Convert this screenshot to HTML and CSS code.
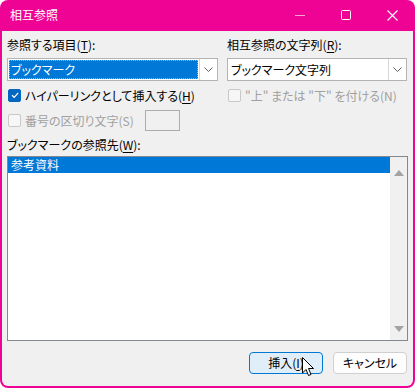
FILE: index.html
```html
<!DOCTYPE html>
<html lang="ja">
<head>
    <meta charset="UTF-8">
    <title>相互参照</title>
    <link rel="stylesheet" href="styles.css">
</head>
<body>
    <div class="window">
        <div class="titlebar">
            <span class="title">相互参照</span>
            <div class="controls">
                <span class="ctl min"><svg width="10" height="10" viewBox="0 0 10 10"><line x1="0" y1="5.5" x2="10" y2="5.5" stroke="#f7a6d2" stroke-width="1"/></svg></span>
                <span class="ctl"><svg width="10" height="10" viewBox="0 0 10 10"><rect x="0.5" y="0.5" width="9" height="9" rx="1" fill="none" stroke="#fff" stroke-width="1"/></svg></span>
                <span class="ctl"><svg width="11" height="11" viewBox="0 0 11 11"><path d="M0.5 0.5 L10.5 10.5 M10.5 0.5 L0.5 10.5" stroke="#fff" stroke-width="1.1"/></svg></span>
            </div>
        </div>

        <div class="content">
            <div class="top">
                <div class="col left">
                    <div class="label">参照する項目(<u>T</u>):</div>
                    <div class="combo">
                        <span class="value focused"><span class="hilite">ブックマーク</span></span>
                        <span class="drop"><svg width="9" height="5" viewBox="0 0 9 5"><path d="M0.5 0.5 L4.5 4.5 L8.5 0.5" fill="none" stroke="#606060" stroke-width="1"/></svg></span>
                    </div>
                    <div class="check-row">
                        <span class="box checked"><svg width="10" height="10" viewBox="0 0 10 10"><path d="M2 5.2 L4.2 7.3 L8.2 2.8" fill="none" stroke="#fff" stroke-width="1.2"/></svg></span>
                        <span>ハイパーリンクとして挿入する(<u>H</u>)</span>
                    </div>
                    <div class="check-row second disabled">
                        <span class="box"></span>
                        <span class="sep-text">番号の区切り文字(S)</span>
                        <span class="small-input"></span>
                    </div>
                </div>
                <div class="col right">
                    <div class="label">相互参照の文字列(<u>R</u>):</div>
                    <div class="combo">
                        <span class="value">ブックマーク文字列</span>
                        <span class="drop"><svg width="9" height="5" viewBox="0 0 9 5"><path d="M0.5 0.5 L4.5 4.5 L8.5 0.5" fill="none" stroke="#606060" stroke-width="1"/></svg></span>
                    </div>
                    <div class="check-row disabled">
                        <span class="box"></span>
                        <span>"上" または "下" を付ける(N)</span>
                    </div>
                </div>
            </div>

            <div class="label list-label">ブックマークの参照先(<u>W</u>):</div>
            <div class="listbox">
                <div class="items">
                    <div class="item selected">参考資料</div>
                </div>
                <div class="scrollbar">
                    <svg width="10" height="6" viewBox="0 0 10 6"><path d="M0 6 L5 0 L10 6 Z" fill="#a3a3a3"/></svg>
                    <svg width="10" height="6" viewBox="0 0 10 6"><path d="M0 0 L5 6 L10 0 Z" fill="#a3a3a3"/></svg>
                </div>
            </div>

            <div class="buttons">
                <span class="btn primary">挿入(<u>I</u>)
                    <svg class="cursor" width="13" height="20" viewBox="0 0 13 20"><path d="M0.5 0.5 L0.5 16 L4 12.5 L6.5 18.5 L9 17.5 L6.5 11.5 L11.5 11.5 Z" fill="#fff" stroke="#000" stroke-width="1"/></svg>
                </span>
                <span class="btn">キャンセル</span>
            </div>
        </div>
    </div>
</body>
</html>
```

FILE: styles.css
```css
body {
    margin: 0;
    padding: 0;
    background-color: #ffffff;
    font-family: "Noto Sans CJK JP", "Noto Sans", sans-serif;
    font-size: 12px;
    font-feature-settings: "palt";
    color: #000000;
}

.window {
    width: 415px;
    height: 388px;
    box-sizing: border-box;
    background-color: #ef0395;
    border-radius: 8px;
    padding: 0 2px 2px 2px;
    display: flex;
    flex-direction: column;
    overflow: hidden;
}

.titlebar {
    height: 31px;
    display: flex;
    align-items: center;
    margin: 0 -2px;
}

.title {
    color: #ffffff;
    font-size: 12px;
    padding-left: 10px;
    flex: 1;
    line-height: 16px;
    margin-top: -1px;
}

.controls {
    display: flex;
    height: 31px;
}

.ctl {
    width: 46px;
    display: flex;
    align-items: center;
    justify-content: center;
    margin-top: -1px;
}

.content {
    flex: 1;
    background-color: #f0f0f0;
    border-radius: 0 0 6px 6px;
    padding: 4px 6px 0 5px;
    display: flex;
    flex-direction: column;
}

.top {
    display: flex;
    gap: 9px;
}

.col.left {
    width: 211px;
}

.col.right {
    width: 180px;
}

.label {
    height: 20px;
    line-height: 20px;
    white-space: nowrap;
}

u {
    text-underline-offset: 2px;
}

.combo {
    margin-top: 3px;
    height: 23px;
    box-sizing: border-box;
    border: 1px solid #b4b4b4;
    background-color: #ffffff;
    display: flex;
}

.combo .value {
    flex: 1;
    display: flex;
    align-items: center;
    padding-left: 3px;
    line-height: 16px;
}

.combo .value.focused {
    margin: 1px;
    padding-left: 0;
    background-color: #0078d7;
    border: 1px dotted #f4a23a;
    color: #ffffff;
}

.hilite {
    padding-left: 1px;
}

.drop {
    width: 17px;
    border-left: 1px solid #d6d6d6;
    display: flex;
    align-items: center;
    justify-content: center;
}

.check-row {
    margin-top: 5px;
    height: 18px;
    display: flex;
    align-items: center;
    gap: 4px;
    white-space: nowrap;
    padding-left: 1px;
}

.check-row.second {
    margin-top: 6px;
    height: 21px;
}

.check-row.disabled {
    color: #a0a0a0;
}

.sep-text {
    width: 116px;
}

.box {
    width: 13px;
    height: 13px;
    box-sizing: border-box;
    border: 1px solid #c8c8c8;
    border-radius: 2px;
    background-color: #f6f6f6;
    display: flex;
    align-items: center;
    justify-content: center;
}

.box.checked {
    background-color: #0067c0;
    border-color: #0067c0;
}

.small-input {
    width: 35px;
    height: 21px;
    box-sizing: border-box;
    border: 1px solid #adadad;
}

.list-label {
    margin-top: 4px;
}

.listbox {
    margin-top: 1px;
    height: 185px;
    width: 401px;
    box-sizing: border-box;
    border: 1px solid #828790;
    background-color: #ffffff;
    display: flex;
}

.items {
    flex: 1;
}

.item {
    height: 16px;
    line-height: 16px;
    padding-left: 3px;
}

.item.selected {
    background-color: #0078d7;
    color: #ffffff;
}

.scrollbar {
    width: 17px;
    background-color: #f0f0f0;
    display: flex;
    flex-direction: column;
    justify-content: space-between;
    align-items: center;
    padding: 13px 0 8px;
}

.buttons {
    margin-top: 11px;
    display: flex;
    justify-content: flex-end;
    gap: 10px;
}

.btn {
    position: relative;
    width: 74px;
    height: 22px;
    box-sizing: border-box;
    border: 1px solid #d0d0d0;
    border-radius: 4px;
    background-color: #fdfdfd;
    display: flex;
    align-items: center;
    justify-content: center;
    line-height: 16px;
}

.btn.primary {
    background-color: #e0eef9;
    border-color: #0078d4;
}

.cursor {
    position: absolute;
    left: 52px;
    top: 4px;
}
```
